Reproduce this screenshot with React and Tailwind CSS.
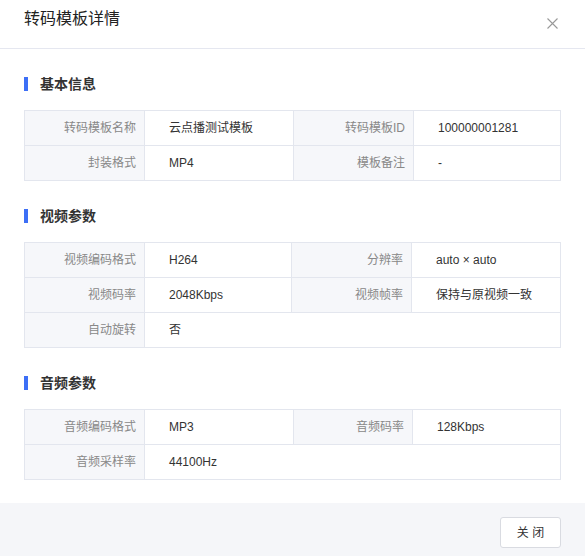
import React from "react";

const sections = [
  {
    title: "基本信息",
    cols: "grid-cols-[120px_149px_120px_1fr]",
    rows: [
      [["转码模板名称", "云点播测试模板"], ["转码模板ID", "100000001281"]],
      [["封装格式", "MP4"], ["模板备注", "-"]],
    ],
  },
  {
    title: "视频参数",
    cols: "grid-cols-[120px_147px_120px_1fr]",
    rows: [
      [["视频编码格式", "H264"], ["分辨率", "auto × auto"]],
      [["视频码率", "2048Kbps"], ["视频帧率", "保持与原视频一致"]],
      [["自动旋转", "否"]],
    ],
  },
  {
    title: "音频参数",
    cols: "grid-cols-[120px_149px_119px_1fr]",
    rows: [
      [["音频编码格式", "MP3"], ["音频码率", "128Kbps"]],
      [["音频采样率", "44100Hz"]],
    ],
  },
];

function Label({ children }) {
  return (
    <div className="h-[35px] flex items-center justify-end pr-2 bg-[#f6f7fa] border-r border-b border-[#e3e6ee] text-[12px] text-[#888]">
      {children}
    </div>
  );
}

function Value({ children, wide }) {
  return (
    <div
      className={
        "h-[35px] flex items-center pl-6 border-r border-b border-[#e3e6ee] text-[12px] text-[#333] " +
        (wide ? "col-span-3" : "")
      }
    >
      {children}
    </div>
  );
}

function Section({ section, first }) {
  return (
    <div className={first ? "" : "mt-6"}>
      <div className="flex items-center h-[22px]">
        <span className="w-1 h-[14px] bg-[#3d6ff6]" />
        <span className="ml-3 text-[14px] leading-[22px] font-bold text-[#333]">{section.title}</span>
      </div>
      <div className={"mt-[15px] grid border-t border-l border-[#e3e6ee] " + section.cols}>
        {section.rows.map((row, i) =>
          row.map(([k, v], j) => (
            <React.Fragment key={i + "-" + j}>
              <Label>{k}</Label>
              <Value wide={row.length === 1}>{v}</Value>
            </React.Fragment>
          ))
        )}
      </div>
    </div>
  );
}

export default function App() {
  return (
    <div
      className="w-[585px] h-[556px] overflow-hidden bg-white flex flex-col"
      style={{ fontFamily: '"Liberation Sans", "Noto Sans CJK SC", sans-serif' }}
    >
      <div className="h-[49px] shrink-0 flex justify-between items-start pl-6 pr-[27px] border-b border-[#e5e7f0]">
        <h1 className="pt-[7px] text-[16px] leading-6 text-[#222]">转码模板详情</h1>
        <svg className="mt-[18px]" width="11" height="11" viewBox="0 0 11 11" fill="none">
          <path d="M0.5 0.5L10.5 10.5M10.5 0.5L0.5 10.5" stroke="#999" strokeWidth="1.1" />
        </svg>
      </div>
      <div className="px-6 pt-6 shrink-0">
        {sections.map((s, i) => (
          <Section key={s.title} section={s} first={i === 0} />
        ))}
      </div>
      <div className="mt-[23px] flex-1 bg-[#f5f6f9] flex justify-end items-start pt-[14px] pr-6">
        <button className="w-[61px] h-[31px] bg-white border border-[#d9dbe1] rounded-[3px] text-[12px] text-[#333]">
          关 闭
        </button>
      </div>
    </div>
  );
}
